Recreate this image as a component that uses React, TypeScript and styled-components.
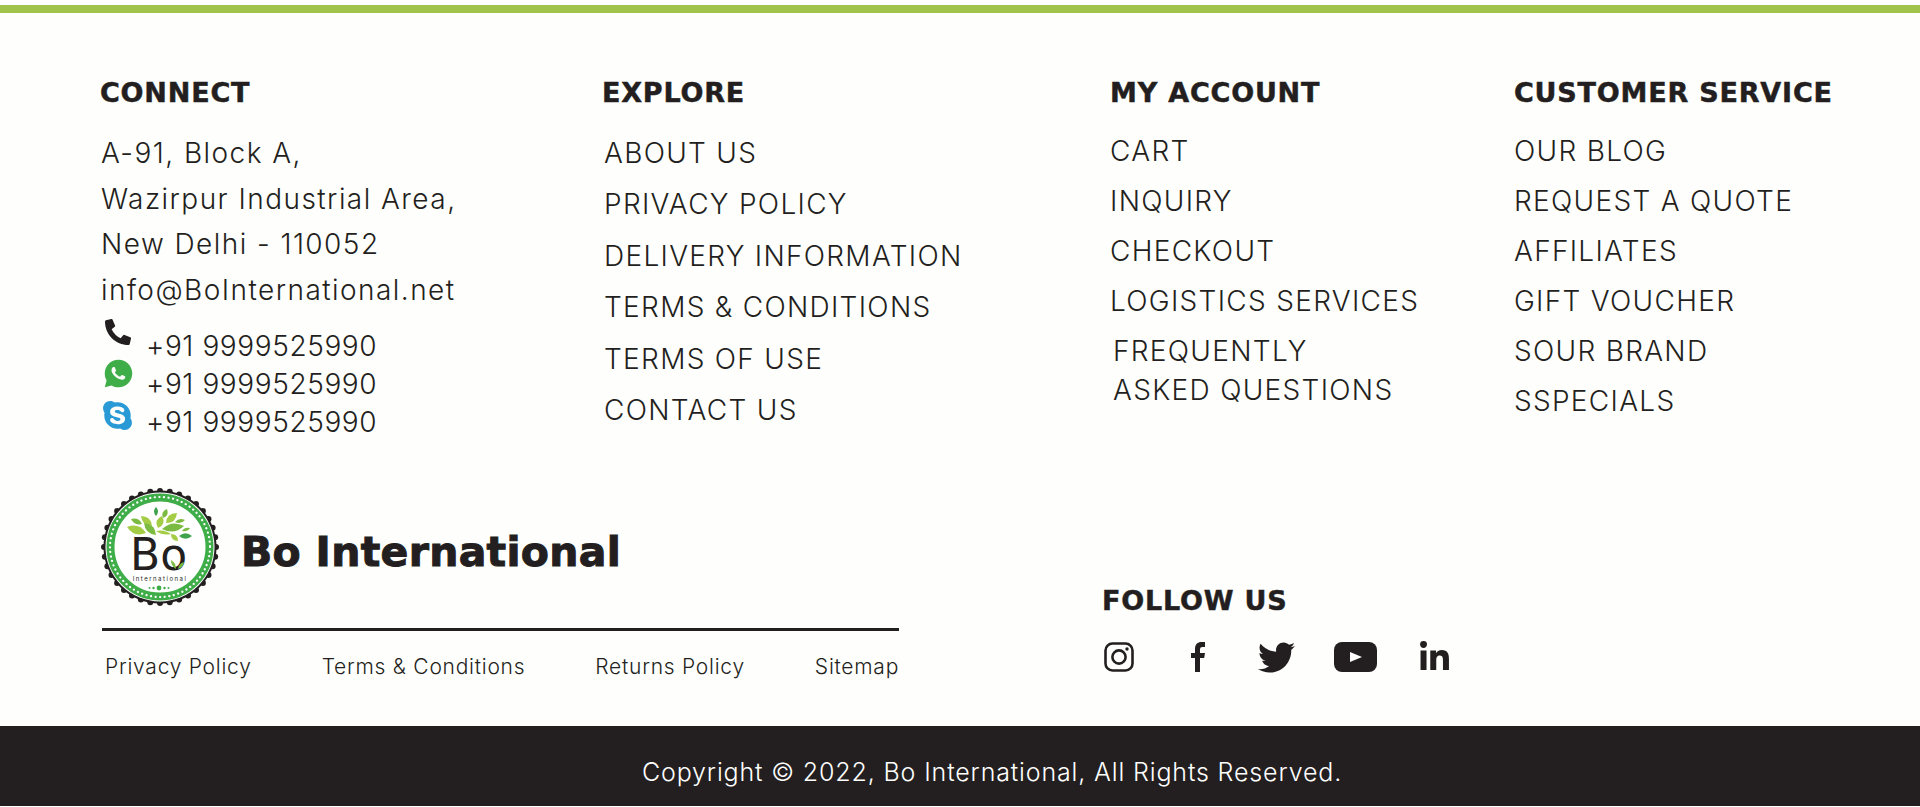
import React from "react";
import styled, { createGlobalStyle } from "styled-components";
import { FaPhoneAlt, FaSkype, FaTwitter, FaLinkedinIn } from "react-icons/fa";
import { RiWhatsappFill } from "react-icons/ri";

const GlobalStyle = createGlobalStyle`
  html, body {
    margin: 0;
    padding: 0;
    background: #fefefc;
  }
  * { box-sizing: border-box; }
`;

const Page = styled.div`
  width: 1920px;
  height: 807px;
  overflow: hidden;
  padding-top: 5px;
  font-family: Inter, "Liberation Sans", sans-serif;
  color: #231f20;
`;

const GreenBar = styled.div`
  height: 8px;
  background: #a0c44b;
`;

const Columns = styled.div`
  display: grid;
  grid-template-columns: 502px 508px 404px 1fr;
  height: 475px;
  padding: 63px 0 0 100px;
`;

const Column = styled.div`
  display: flex;
  flex-direction: column;
`;

const Heading = styled.h4`
  margin: 0;
  font-family: "DejaVu Sans", Inter, sans-serif;
  font-size: 27px;
  line-height: 34px;
  font-weight: 700;
  letter-spacing: 0.8px;
  -webkit-text-stroke: 0.5px #231f20;
  white-space: nowrap;
`;

const AddressList = styled.div`
  margin-top: 21px;
  padding-left: 1px;
  font-size: 28px;
  line-height: 45.7px;
  font-weight: 300;
  letter-spacing: 1.45px;
  white-space: nowrap;
`;

const Phones = styled.div`
  margin-top: 13px;
  display: flex;
  flex-direction: column;
`;

const PhoneRow = styled.div`
  position: relative;
  height: 38px;
  padding-left: 46px;
  font-size: 28px;
  line-height: 38px;
  font-weight: 300;
  letter-spacing: 0.6px;
  white-space: nowrap;
`;

const PhoneIcon = styled.span<{ $top: number; $left: number; $color: string }>`
  position: absolute;
  left: ${(p) => p.$left}px;
  top: ${(p) => p.$top}px;
  display: flex;
  color: ${(p) => p.$color};
`;

const LinkList = styled.ul<{ $gap: number; $top: number; $indent?: number }>`
  list-style: none;
  margin: ${(p) => p.$top}px 0 0;
  padding: 0 0 0 ${(p) => p.$indent || 0}px;
  font-size: 28px;
  font-weight: 300;
  line-height: ${(p) => p.$gap}px;
  letter-spacing: 1.3px;
  white-space: nowrap;
`;

const WrappedItem = styled.li`
  padding-left: 3px;
  line-height: 39px;
  margin-top: 6px;
`;

const BottomRow = styled.div`
  display: flex;
  height: 238px;
  padding-left: 102px;
`;

const BrandBlock = styled.div`
  width: 1000px;
  display: flex;
  flex-direction: column;
`;

const BrandRow = styled.div`
  display: flex;
  align-items: center;
  height: 118px;
`;

const LogoMark = styled.svg`
  flex-shrink: 0;
  margin: -2px 20px -2px -3px;
`;

const BrandName = styled.div`
  font-family: "DejaVu Sans", Inter, sans-serif;
  font-size: 41px;
  font-weight: 700;
  letter-spacing: 0.3px;
  padding-top: 9px;
  -webkit-text-stroke: 1px #231f20;
  white-space: nowrap;
`;

const Rule = styled.div`
  width: 797px;
  height: 3px;
  margin-top: 22px;
  background: #231f20;
`;

const LegalRow = styled.div`
  display: flex;
  gap: 70px;
  padding: 19px 0 0 3px;
  font-size: 21px;
  line-height: 34px;
  font-weight: 300;
  letter-spacing: 0.75px;
  white-space: nowrap;
`;

const FollowBlock = styled.div`
  padding-top: 96px;
`;

const Socials = styled.div`
  display: flex;
  gap: 34.8px;
  margin: 24px 0 0 -5px;
`;

const SocialCell = styled.a`
  width: 44px;
  height: 30px;
  display: flex;
  align-items: center;
  justify-content: center;
  color: #231f20;
`;

const CopyBar = styled.div`
  height: 80px;
  padding-left: 64px;
  background: #231f20;
  color: #fff;
  text-align: center;
  font-size: 25px;
  line-height: 92px;
  font-weight: 300;
  letter-spacing: 0.85px;
  white-space: nowrap;
`;

// leaf drawn from tip to tip, bulging both sides of the line
function leafPath(x1: number, y1: number, x2: number, y2: number, w: number) {
  const mx = (x1 + x2) / 2;
  const my = (y1 + y2) / 2;
  const dx = x2 - x1;
  const dy = y2 - y1;
  const len = Math.hypot(dx, dy);
  const nx = (-dy / len) * w;
  const ny = (dx / len) * w;
  return `M${x1} ${y1}Q${mx + nx} ${my + ny} ${x2} ${y2}Q${mx - nx} ${my - ny} ${x1} ${y1}Z`;
}

const LIGHT = "#a5cc45";
const MID = "#7cbb42";
const DARK = "#3fa34d";

const leaves: [number, number, number, number, number, string][] = [
  [28, 41, 47, 47, 8, LIGHT],
  [32, 33, 43, 38, 5, MID],
  [42, 30, 53, 40, 6.5, LIGHT],
  [45, 37, 57, 49, 7, MID],
  [57, 21, 57, 30, 4, DARK],
  [59, 42, 63, 30, 7, LIGHT],
  [64, 32, 68, 23, 5, MID],
  [67, 37, 78, 27, 7, LIGHT],
  [76, 36, 86, 34, 4, MID],
  [63, 43, 85, 40, 8, MID],
  [83, 45, 91, 42, 3, MID],
  [80, 50, 93, 50, 5.5, DARK],
  [72, 48, 79, 55, 5, LIGHT],
  [57, 45, 72, 48, 3.5, LIGHT],
];

function Logo() {
  const scallops = Array.from({ length: 36 }, (_, i) => {
    const a = (i / 36) * Math.PI * 2;
    return <circle key={i} cx={61 + 56 * Math.cos(a)} cy={61 + 56 * Math.sin(a)} r={3} fill="#231f20" />;
  });
  return (
    <LogoMark width="122" height="122" viewBox="0 0 122 122">
      {scallops}
      <circle cx="61" cy="61" r="56.5" fill="#231f20" />
      <circle cx="61" cy="61" r="54.5" fill="#fff" />
      <circle cx="61" cy="61" r="49.5" fill="#fff" stroke="#3fae49" strokeWidth="8" />
      <circle cx="61" cy="61" r="50" fill="none" stroke="#fff" strokeWidth="2.2" strokeLinecap="round" strokeDasharray="0.1 4.5" />
      {leaves.map(([x1, y1, x2, y2, w, c], i) => (
        <path key={i} d={leafPath(x1, y1, x2, y2, w)} fill={c} />
      ))}
      <text x="31" y="84" fontFamily="'DejaVu Sans', sans-serif" fontSize="44" fill="#231f20">
        Bo
      </text>
      <path d={leafPath(77, 83, 72, 74, 3)} fill={MID} />
      <path d={leafPath(79, 83, 85, 76, 3)} fill={MID} />
      <text x="61" y="95" textAnchor="middle" fontFamily="Inter, sans-serif" fontSize="6" fill="#231f20" letterSpacing="1.5">
        International
      </text>
      <circle cx="60" cy="102" r="2.4" fill="#3fae49" />
      <circle cx="54.5" cy="102" r="1.2" fill="#3fae49" />
      <circle cx="65.5" cy="102" r="1.2" fill="#3fae49" />
      <circle cx="50.5" cy="102" r="1" fill="#3fae49" />
      <circle cx="69.5" cy="102" r="1" fill="#3fae49" />
    </LogoMark>
  );
}

function InstagramIcon() {
  return (
    <svg width="30" height="30" viewBox="0 0 30 30" fill="none" stroke="#231f20" strokeWidth="2.6">
      <rect x="1.5" y="1.5" width="27" height="27" rx="7" />
      <circle cx="15" cy="15" r="6.6" />
      <circle cx="23" cy="7" r="1.7" fill="#231f20" stroke="none" />
    </svg>
  );
}

function FacebookIcon() {
  return (
    <svg width="14" height="30" viewBox="0 0 14 30" fill="#231f20">
      <path d="M4 30V16H0v-5h4V7c0-4.5 2.5-7 6.5-7H14v5h-2.5C9.8 5 9 5.8 9 7.5V11h5l-.8 5H9v14z" />
    </svg>
  );
}

function YoutubeIcon() {
  return (
    <svg width="43" height="30" viewBox="0 0 43 30">
      <rect width="43" height="30" rx="8" fill="#231f20" />
      <path d="M16 10l12 5-12 5z" fill="#fefefc" />
    </svg>
  );
}

const explore = ["ABOUT US", "PRIVACY POLICY", "DELIVERY INFORMATION", "TERMS & CONDITIONS", "TERMS OF USE", "CONTACT US"];
const account = ["CART", "INQUIRY", "CHECKOUT", "LOGISTICS SERVICES"];
const service = ["OUR BLOG", "REQUEST A QUOTE", "AFFILIATES", "GIFT VOUCHER", "SOUR BRAND", "SSPECIALS"];
const legal = ["Privacy Policy", "Terms & Conditions", "Returns Policy", "Sitemap"];

export default function App() {
  return (
    <Page>
      <GlobalStyle />
      <GreenBar />
      <Columns>
        <Column>
          <Heading>CONNECT</Heading>
          <AddressList>
            <div>A-91, Block A,</div>
            <div>Wazirpur Industrial Area,</div>
            <div>New Delhi - 110052</div>
            <div>info@BoInternational.net</div>
          </AddressList>
          <Phones>
            <PhoneRow>
              <PhoneIcon $top={-8} $left={5} $color="#231f20">
                <FaPhoneAlt size={26} />
              </PhoneIcon>
              +91 9999525990
            </PhoneRow>
            <PhoneRow>
              <PhoneIcon $top={-8} $left={2} $color="#3fae49">
                <RiWhatsappFill size={33} />
              </PhoneIcon>
              +91 9999525990
            </PhoneRow>
            <PhoneRow>
              <PhoneIcon $top={-4} $left={1} $color="#2a9ad6">
                <FaSkype size={33} />
              </PhoneIcon>
              +91 9999525990
            </PhoneRow>
          </Phones>
        </Column>
        <Column>
          <Heading>EXPLORE</Heading>
          <LinkList $gap={51.4} $top={18} $indent={2}>
            {explore.map((t) => (
              <li key={t}>{t}</li>
            ))}
          </LinkList>
        </Column>
        <Column>
          <Heading>MY ACCOUNT</Heading>
          <LinkList $gap={50} $top={16}>
            {account.map((t) => (
              <li key={t}>{t}</li>
            ))}
            <WrappedItem>
              FREQUENTLY
              <br />
              ASKED QUESTIONS
            </WrappedItem>
          </LinkList>
        </Column>
        <Column>
          <Heading>CUSTOMER SERVICE</Heading>
          <LinkList $gap={50} $top={16}>
            {service.map((t) => (
              <li key={t}>{t}</li>
            ))}
          </LinkList>
        </Column>
      </Columns>
      <BottomRow>
        <BrandBlock>
          <BrandRow>
            <Logo />
            <BrandName>Bo International</BrandName>
          </BrandRow>
          <Rule />
          <LegalRow>
            {legal.map((t) => (
              <span key={t}>{t}</span>
            ))}
          </LegalRow>
        </BrandBlock>
        <FollowBlock>
          <Heading>FOLLOW US</Heading>
          <Socials>
            <SocialCell><InstagramIcon /></SocialCell>
            <SocialCell><FacebookIcon /></SocialCell>
            <SocialCell><FaTwitter size={37} /></SocialCell>
            <SocialCell><YoutubeIcon /></SocialCell>
            <SocialCell><FaLinkedinIn size={33} /></SocialCell>
          </Socials>
        </FollowBlock>
      </BottomRow>
      <CopyBar>Copyright © 2022, Bo International, All Rights Reserved.</CopyBar>
    </Page>
  );
}
